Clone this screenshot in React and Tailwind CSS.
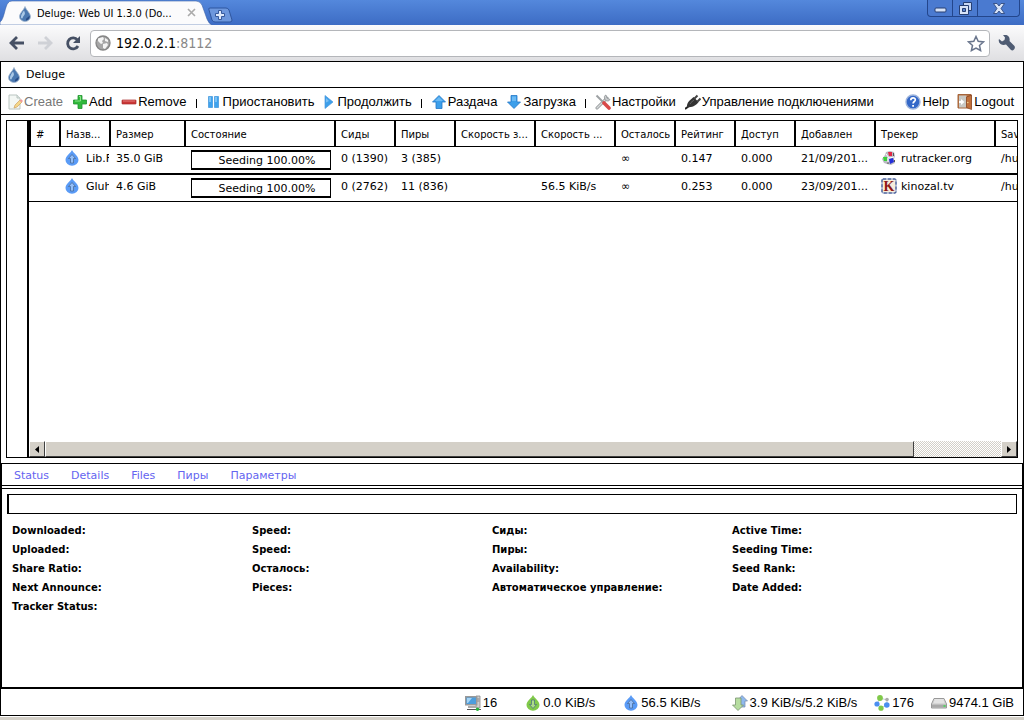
import { useState } from "react";

const COLUMNS = [
    { key: "num", label: "#", width: "w-[30px]" },
    { key: "name", label: "Назв...", width: "w-[50px]" },
    { key: "size", label: "Размер", width: "w-[75px]" },
    { key: "state", label: "Состояние", width: "w-[150px]" },
    { key: "seeds", label: "Сиды", width: "w-[60px]" },
    { key: "peers", label: "Пиры", width: "w-[60px]" },
    { key: "down", label: "Скорость з...", width: "w-[80px]" },
    { key: "up", label: "Скорость ...", width: "w-[80px]" },
    { key: "eta", label: "Осталось", width: "w-[60px]" },
    { key: "ratio", label: "Рейтинг", width: "w-[60px]" },
    { key: "avail", label: "Доступ", width: "w-[60px]" },
    { key: "added", label: "Добавлен", width: "w-[80px]" },
    { key: "tracker", label: "Трекер", width: "w-[120px]" },
    { key: "path", label: "Sav", width: "w-[120px]" },
];

const TORRENTS = [
    { name: "Lib.F", size: "35.0 GiB", state: "Seeding 100.00%", seeds: "0 (1390)", peers: "3 (385)", up: "", eta: "∞", ratio: "0.147", avail: "0.000", added: "21/09/201...", tracker: "rutracker.org", icon: RutrackerIcon, path: "/hu" },
    { name: "Gluh", size: "4.6 GiB", state: "Seeding 100.00%", seeds: "0 (2762)", peers: "11 (836)", up: "56.5 KiB/s", eta: "∞", ratio: "0.253", avail: "0.000", added: "23/09/201...", tracker: "kinozal.tv", icon: KinozalIcon, path: "/hu" },
];

const DETAILS = [
    ["Downloaded:", "Uploaded:", "Share Ratio:", "Next Announce:", "Tracker Status:"],
    ["Speed:", "Speed:", "Осталось:", "Pieces:"],
    ["Сиды:", "Пиры:", "Availability:", "Автоматическое управление:"],
    ["Active Time:", "Seeding Time:", "Seed Rank:", "Date Added:"],
];

const TABS = ["Status", "Details", "Files", "Пиры", "Параметры"];

export default function App() {
    return (
        <div className="flex min-h-screen flex-col bg-white font-['DejaVu_Sans',sans-serif] text-[11px] text-black">
            <BrowserChrome />
            <main className="flex flex-1 flex-col border-x border-t border-black">
                <header className="flex h-[26px] items-center gap-1 border-b border-black pt-px pl-[5px]">
                    <DropIcon />
                    <h1 className="text-[11px]">Deluge</h1>
                </header>
                <Toolbar />
                <TorrentGrid />
                <DetailsPanel />
                <StatusBar />
            </main>
            <div className="mt-px h-[3px] bg-[#d4d0c8]" />
        </div>
    );
}

function BrowserChrome() {
    const [url, setUrl] = useState("192.0.2.1");

    return (
        <div className="font-['DejaVu_Sans_Condensed','DejaVu_Sans',sans-serif]">
            <div className="flex h-[25px] items-start justify-between bg-linear-to-b from-[#5488dc] to-[#3d6cc4]">
                <div className="flex">
                    <div className="relative flex h-[25px] w-[208px] items-center">
                        <svg className="absolute inset-0" width="212" height="25" viewBox="0 0 212 25">
                            <path d="M0 25V22C4 20 5 6 8 3Q9 1 12 1H196Q200 1 202 5L207 19Q209 24 212 25Z" fill="#fbfbfc" stroke="#3a62a8" strokeWidth=".6" />
                        </svg>
                        <span className="relative flex flex-1 items-center gap-1 pt-[3px] pl-[17px] text-[11px]">
                            <DropIcon />
                            <span className="w-[147px]">Deluge: Web UI 1.3.0 (Do...</span>
                        </span>
                        <button aria-label="Close tab" className="relative mr-3">
                            <svg width="9" height="9" viewBox="0 0 9 9"><path d="M1 1l7 7M8 1l-7 7" stroke="#aaa" strokeWidth="1.6" /></svg>
                        </button>
                    </div>
                    <button aria-label="New tab" className="mt-[5px]">
                        <svg width="26" height="16" viewBox="0 0 26 16">
                            <path d="M2 1H18Q20 1 21 3L24 13Q24 15 22 15H7Q5 15 4 13L1 3Q0 1 2 1Z" fill="#6d97dd" stroke="#2f569f" />
                            <path d="M10.500 3.500h3v3h3v3h-3v3h-3v-3h-3v-3h3z" fill="#dde8fa" stroke="#36599c" />
                        </svg>
                    </button>
                </div>
                <div className="mr-1 flex h-[17px] rounded-b border border-t-0 border-[#23468c] bg-[#4a7ad0]">
                    <button aria-label="Minimize" className="grid w-[25px] place-items-center border-r border-[#23468c]">
                        <svg width="13" height="14" viewBox="0 0 13 14"><rect x="1" y="7" width="11" height="4" rx="1" fill="#d8e4f8" stroke="#263f73" /></svg>
                    </button>
                    <button aria-label="Restore" className="grid w-[25px] place-items-center border-r border-[#23468c]">
                        <svg width="13" height="13" viewBox="0 0 13 13">
                            <path d="M4.500.5h8v8h-8z" fill="#c9d9f5" stroke="#263f73" />
                            <path d="M.5 3.500h9v9h-9z" fill="#d8e4f8" stroke="#263f73" />
                            <path d="M3.500 6.500h3v3h-3z" fill="#5c86d2" stroke="#263f73" />
                        </svg>
                    </button>
                    <button aria-label="Close" className="grid w-[41px] place-items-center">
                        <svg width="12" height="11" viewBox="0 0 12 11"><path d="M.5.5h3.500L6 3 8 .5h3.500L8 5.500l3.500 5H8L6 8l-2 2.500H.5L4 5.500z" fill="#d8e4f8" stroke="#263f73" strokeWidth=".8" /></svg>
                    </button>
                </div>
            </div>
            <div className="flex h-9 items-center bg-linear-to-b from-[#fbfbfc] to-[#dfdfe2] pl-[9px]">
                <button aria-label="Back" className="mr-3">
                    <svg width="16" height="14" viewBox="0 0 16 14"><path d="M8 1L2 7l6 6M2 7h13" fill="none" stroke="#465064" strokeWidth="2.800" /></svg>
                </button>
                <button aria-label="Forward" className="mr-3">
                    <svg width="16" height="14" viewBox="0 0 16 14"><path d="M8 1l6 6-6 6M14 7H1" fill="none" stroke="#cfd1d6" strokeWidth="2.800" /></svg>
                </button>
                <button aria-label="Reload" className="mr-[9px]">
                    <svg width="16" height="15" viewBox="0 0 16 15">
                        <path d="M12.500 4A5.500 5.500 0 1 0 13 10" fill="none" stroke="#465064" strokeWidth="2.800" />
                        <path d="M15 0v7H8z" fill="#465064" />
                    </svg>
                </button>
                <div className="flex h-[27px] flex-1 items-center gap-[5px] rounded border border-[#b4b6ba] bg-white px-1 text-sm">
                    <svg width="16" height="16" viewBox="0 0 16 16">
                        <circle cx="8" cy="8" r="7" fill="#a6a6a6" stroke="#858585" strokeWidth="1.300" />
                        <path d="M3 3.500L8 2l1 2-2 2 1 2-2 1-3-3zM8 9l4-1 1 2-3 4-2-1zM10 3l3 2v2l-3-1z" fill="#f4f4f4" />
                    </svg>
                    <label className="flex flex-1 items-center">
                        <input aria-label="Address" value={url} onChange={(e) => setUrl(e.target.value)} className="field-sizing-content outline-none" />
                        <span className="text-[#888]">:8112</span>
                    </label>
                    <button aria-label="Bookmark">
                        <svg width="18" height="17" viewBox="0 0 18 17"><path d="M9 1.500l2.200 4.800 5.300.6-4 3.500 1.100 5.100L9 13l-4.600 2.500 1.100-5.100-4-3.500 5.300-.6z" fill="#fff" stroke="#69758c" strokeWidth="1.500" /></svg>
                    </button>
                </div>
                <button aria-label="Settings" className="mx-2">
                    <svg width="18" height="16" viewBox="0 0 18 16"><path d="M5 0q4-1 6 2 1 2 .5 4l5 5q1 2-.5 3.500T13 15L8 9.500Q5 10.500 2.500 9 0 7 1 4l3 2.500L6.500 5 7 2.500z" fill="#4e5b72" /></svg>
                </button>
            </div>
        </div>
    );
}

function ToolButton({ icon: Icon, label, disabled }) {
    return (
        <button disabled={disabled} className="flex items-center gap-px whitespace-nowrap disabled:text-[#777]">
            <Icon />
            {label}
        </button>
    );
}

function Separator() {
    return <span className="mt-[3px] h-[9px] w-px bg-black" />;
}

function Toolbar() {
    return (
        <nav className="flex h-[27px] items-center gap-[9px] border-b border-black px-[6px] pt-px font-['Liberation_Sans',sans-serif] text-[13px]">
            <ToolButton icon={CreateIcon} label="Create" disabled />
            <ToolButton icon={AddIcon} label="Add" />
            <ToolButton icon={RemoveIcon} label="Remove" />
            <Separator />
            <div className="flex gap-[6px]">
                <ToolButton icon={PauseIcon} label="Приостановить" />
                <ToolButton icon={PlayIcon} label="Продолжить" />
            </div>
            <Separator />
            <ToolButton icon={UpIcon} label="Раздача" />
            <ToolButton icon={DownIcon} label="Загрузка" />
            <Separator />
            <ToolButton icon={ToolsIcon} label="Настройки" />
            <ToolButton icon={PlugIcon} label="Управление подключениями" />
            <div className="ml-auto flex gap-2 pr-[3px]">
                <ToolButton icon={HelpIcon} label="Help" />
                <ToolButton icon={LogoutIcon} label="Logout" />
            </div>
        </nav>
    );
}

function TorrentGrid() {
    return (
        <section className="flex flex-1 px-[5px] py-[5px]">
            <div className="flex min-w-0 flex-1 border border-black">
                <aside className="w-5" />
                <div className="flex min-w-0 flex-1 flex-col border-l-2 border-black">
                    <div className="flex-1 overflow-hidden">
                        <table className="w-[1085px] table-fixed border-separate border-spacing-0">
                            <thead>
                                <tr className="h-[26px] text-[10px]">
                                    {COLUMNS.map((c) => (
                                        <th key={c.key} className={`${c.width} border-b border-l-2 border-black pt-[2px] pl-[5px] text-left font-normal whitespace-nowrap`}>{c.label}</th>
                                    ))}
                                </tr>
                            </thead>
                            <tbody className="[&>tr:first-child>td]:h-7 [&>tr:first-child>td]:border-b-2">
                                {TORRENTS.map((t) => <TorrentRow key={t.name} t={t} />)}
                            </tbody>
                        </table>
                    </div>
                    <Scrollbar />
                </div>
            </div>
        </section>
    );
}

function Cell({ children }) {
    return <td className="h-[27px] border-b border-black py-[3px] pl-[7px] align-top leading-[18px] whitespace-nowrap">{children}</td>;
}

function TorrentRow({ t }) {
    const Tracker = t.icon;
    return (
        <tr>
            <Cell />
            <td className="overflow-hidden border-b border-black py-[3px] pl-[5px] align-top">
                <div className="flex gap-[6px] overflow-hidden leading-[18px] whitespace-nowrap"><SeedIcon color="#5a9bf6" up />{t.name}</div>
            </td>
            <Cell>{t.size}</Cell>
            <td className="border-b border-black py-[3px] pr-[3px] pl-[7px] align-top">
                <div className="h-5 border-x border-y-2 border-black pl-3 text-center leading-[18px]">{t.state}</div>
            </td>
            <Cell>{t.seeds}</Cell>
            <Cell>{t.peers}</Cell>
            <Cell />
            <Cell>{t.up}</Cell>
            <Cell>{t.eta}</Cell>
            <Cell>{t.ratio}</Cell>
            <Cell>{t.avail}</Cell>
            <Cell>{t.added}</Cell>
            <Cell><span className="flex gap-1"><Tracker />{t.tracker}</span></Cell>
            <Cell>{t.path}</Cell>
        </tr>
    );
}

function Scrollbar() {
    const btn = "grid h-4 w-4 place-items-center border border-t-white border-l-white border-r-[#404040] border-b-[#404040] bg-[#d4d0c8]";
    return (
        <div className="flex h-4 bg-[repeating-conic-gradient(#d4d0c8_0_25%,#fff_0_50%)] bg-size-[2px_2px]">
            <button aria-label="Scroll left" className={btn}>
                <svg width="4" height="7" viewBox="0 0 4 7"><path d="M4 0v7L0 3.500z" /></svg>
            </button>
            <div className="w-[88%] border border-t-white border-r-[#404040] border-b-[#404040] border-l-white bg-[#d4d0c8]" />
            <button aria-label="Scroll right" className={`${btn} ml-auto`}>
                <svg width="4" height="7" viewBox="0 0 4 7"><path d="M0 0v7l4-3.500z" /></svg>
            </button>
        </div>
    );
}

function DetailsPanel() {
    const [tab, setTab] = useState("Status");

    return (
        <section className="min-h-[226px] border-x border-t border-b-2 border-black">
            <div className="flex h-[22px] items-center gap-[22px] border-b border-black px-3 pt-[3px] text-[#6464f0]">
                {TABS.map((t) => (
                    <button key={t} aria-pressed={t === tab} onClick={() => setTab(t)}>{t}</button>
                ))}
            </div>
            <div className="mt-[2px] border-t border-black px-[5px] pt-[5px]">
                <div className="h-5 border border-l-2 border-black" />
                <div className="flex pt-[7px] pl-[5px] text-[10px] font-bold">
                    {DETAILS.map((col, i) => (
                        <dl key={i} className="w-60 leading-[19px]">
                            {col.map((label, j) => <dt key={j}>{label}</dt>)}
                        </dl>
                    ))}
                </div>
            </div>
        </section>
    );
}

function StatusItem({ icon, children }) {
    return <span className="flex items-center gap-[2px]">{icon}{children}</span>;
}

function StatusBar() {
    return (
        <footer className="flex h-[27px] items-center justify-end gap-[17px] border-b border-black pt-px pr-[9px] font-['Liberation_Sans',sans-serif] text-[13px]">
            <div className="flex gap-7 pr-[14px]">
                <StatusItem icon={<ComputerIcon />}>16</StatusItem>
                <StatusItem icon={<SeedIcon color="#80c94a" />}>0.0 KiB/s</StatusItem>
                <StatusItem icon={<SeedIcon color="#5a9bf6" up />}>56.5 KiB/s</StatusItem>
            </div>
            <StatusItem icon={<TrafficIcon />}>3.9 KiB/s/5.2 KiB/s</StatusItem>
            <StatusItem icon={<DhtIcon />}>176</StatusItem>
            <StatusItem icon={<DiskIcon />}>9474.1 GiB</StatusItem>
        </footer>
    );
}

function Icon({ children }) {
    return <svg className="shrink-0" width="16" height="16" viewBox="0 0 16 16" fill="none">{children}</svg>;
}

function DropIcon() {
    return (
        <Icon>
            <path d="M8 .5C9 4 13.500 7 13.500 10.500a5.500 5 0 0 1-11 0C2.500 7 7 4 8 .5z" fill="#4a78b0" stroke="#9fb4cc" strokeWidth=".8" />
            <path d="M4 10.500C4 8.500 6 6 7 4.500 8 6.500 8.500 8 7 9.500s-1 3-2 3-1-1-1-2z" fill="#a9c8e6" />
            <path d="M9 14.500c3-.5 4-3 3.500-5-1 2-4 2-3.500 5z" fill="#284c86" />
        </Icon>
    );
}

function SeedIcon({ color, up }) {
    return (
        <Icon>
            <path d="M8 0C9 3 14.500 5.500 14.500 10a6.500 5.800 0 0 1-13 0C1.500 5.500 7 3 8 0z" fill={color} />
            <path d={up ? "M8 4.500l3.500 4h-2v4.500h-3V8.500h-2z" : "M8 13.500l3.500-4h-2V5h-3v4.500h-2z"} fill="#fff" fillOpacity=".35" stroke="#3f5f86" strokeOpacity=".8" strokeWidth=".8" />
        </Icon>
    );
}

function CreateIcon() {
    return (
        <Icon>
            <path d="M2 1h8l3 3v11H2z" fill="#f3f7f4" stroke="#bac5c1" />
            <path d="M10 1v3h3" fill="#dce6e2" stroke="#bac5c1" />
            <path d="M7 14l1-3 5-5 2 2-5 5z" fill="#f5d88a" stroke="#cfa163" strokeWidth=".7" />
            <path d="M12.500 6.500l2 2L16 7l-2-2z" fill="#ef9a9a" />
        </Icon>
    );
}

function AddIcon() {
    return (
        <Icon>
            <path d="M6 1.500h4V6h4.500v4H10v4.500H6V10H1.500V6H6z" fill="#31b93b" stroke="#1f9330" strokeWidth=".8" />
            <path d="M7 2.500h1.500V7H3" stroke="#8de38b" />
        </Icon>
    );
}

function RemoveIcon() {
    return (
        <Icon>
            <rect x="1" y="6" width="14" height="4" rx=".5" fill="#c93636" stroke="#a92c2c" strokeWidth=".7" />
            <path d="M2 7h12" stroke="#e68080" />
        </Icon>
    );
}

function PauseIcon() {
    return (
        <Icon>
            <path d="M2.500 2.500h4v11h-4zM8.500 2.500h4v11h-4z" fill="#3fa3ee" stroke="#4a9ade" strokeWidth=".8" />
            <path d="M4 3v5M10 3v5" stroke="#8fcdf8" strokeWidth="1.500" />
        </Icon>
    );
}

function PlayIcon() {
    return (
        <Icon>
            <path d="M4 1.500L12 8l-8 6.500z" fill="#3d9fea" stroke="#4a9ade" strokeWidth=".7" />
            <path d="M5 4v4.500l3-1.500z" fill="#7cc0f4" />
        </Icon>
    );
}

function UpIcon() {
    return (
        <Icon>
            <path d="M8 1.500L14.500 8H11v6.500H5V8H1.500z" fill="#3d9fea" stroke="#2377c6" strokeWidth=".8" />
            <path d="M8 3L4 7h8z" fill="#6cbaf3" />
        </Icon>
    );
}

function DownIcon() {
    return (
        <Icon>
            <path d="M8 14.500L14.500 8H11V1.500H5V8H1.500z" fill="#3d9fea" stroke="#2377c6" strokeWidth=".8" />
            <path d="M6 2.500h4V7H6z" fill="#6cbaf3" />
        </Icon>
    );
}

function ToolsIcon() {
    return (
        <Icon>
            <path d="M2 14L12 4" stroke="#8b8f92" strokeWidth="3" strokeLinecap="round" />
            <path d="M2 14L12 4" stroke="#d7dadb" strokeWidth="1.500" strokeLinecap="round" />
            <path d="M11 1l1 3 3 1.500c-1 2-4 2-5 0S9 1.500 11 1z" fill="#c7cacc" stroke="#85898c" strokeWidth=".7" />
            <path d="M1.500 1.500L9 9" stroke="#9da1a3" strokeWidth="2" />
            <path d="M9 9l5 5" stroke="#d94a4a" strokeWidth="3.600" strokeLinecap="round" />
        </Icon>
    );
}

function PlugIcon() {
    return (
        <Icon>
            <path d="M0 15L4 12" stroke="#222" strokeWidth="2" />
            <path d="M2 13C1.500 8 6 5.500 8.500 3L13.500 8c-2 3-6 6-11.500 5z" fill="#333" />
            <path d="M5 10c1-2 3-3 4-4" stroke="#666" />
            <path d="M9.500 4.500l3-3M12.500 7.500l3-3" stroke="#444" strokeWidth="2" />
        </Icon>
    );
}

function HelpIcon() {
    return (
        <Icon>
            <circle cx="8" cy="8" r="7" fill="#3468c8" stroke="#9eb5dd" strokeWidth="1.400" />
            <path d="M5.800 6.300C5.800 3 10.500 3.300 10.300 6c-.1 1.500-2.200 1.600-2.200 3.500" stroke="#fff" strokeWidth="1.700" />
            <path d="M7.200 11h1.800v1.700H7.200z" fill="#fff" />
        </Icon>
    );
}

function LogoutIcon() {
    return (
        <Icon>
            <path d="M1 .5h13v13.500H1z" fill="#b87343" stroke="#a5643a" />
            <path d="M2 1.500h7.500v12H2z" fill="#c8c8c4" />
            <path d="M9.500 3l5-2v14.500l-5-2z" fill="#c0703c" stroke="#84411d" strokeWidth=".7" />
            <path d="M2 7h2V5l3.500 3L4 11V9H2z" fill="#fff" />
            <circle cx="10.800" cy="8.500" r=".8" fill="#f4d68c" />
        </Icon>
    );
}

function RutrackerIcon() {
    return (
        <Icon>
            <path d="M5 2l4-1 4 1 1 4-1 3 1 4-4 2-4-1-3-1-2-4 3-4z" fill="#b9b9c2" />
            <path d="M7 2h4v4H8z" fill="#e22745" />
            <path d="M2 7h4v4H3z" fill="#3ad13a" />
            <path d="M8 9l4-1 1 4-4 2z" fill="#2430da" />
            <path d="M5 4l3 4 5-1M7 8v5" stroke="#fff" />
            <path d="M12.500 3v3M13.500 10v2M6 13h2" stroke="#555" />
        </Icon>
    );
}

function KinozalIcon() {
    return (
        <svg className="shrink-0" width="16" height="16" viewBox="0 0 16 16">
            <rect x="1" y="1" width="14" height="14" rx="1" fill="#f7edda" stroke="#7d92c4" />
            <rect x="1" y="1" width="14" height="14" rx="1" fill="none" stroke="#2f4788" strokeDasharray="3 2" />
            <text x="8" y="12.500" textAnchor="middle" fontFamily="Liberation Serif" fontWeight="bold" fontSize="14" fill="#8f1717">K</text>
        </svg>
    );
}

function ComputerIcon() {
    return (
        <Icon>
            <path d="M11 1h4v12h-4z" fill="#cfcfcf" stroke="#888" strokeWidth=".8" />
            <path d="M11.500 4h3M11.500 6h3" stroke="#888" />
            <path d="M.7 1.700h11v8h-11z" fill="#4c9ddd" stroke="#999" strokeWidth="1.400" />
            <path d="M2 3h5L3 8H2z" fill="#a5d4f5" />
            <path d="M3 12h8" stroke="#aaa" strokeWidth="2" />
            <path d="M2 14.500h14" stroke="#555" />
            <circle cx="12.500" cy="14.300" r="1.700" fill="#27b43a" />
        </Icon>
    );
}

function TrafficIcon() {
    return (
        <Icon>
            <path d="M10 .5L15.500 6H13v6H8V6H5z" fill="#8fb9ee" stroke="#7187a6" strokeWidth=".7" />
            <path d="M6 15.500L11.500 10H9V3H3.500v7H.5z" fill="#b6dda0" stroke="#7b9572" strokeWidth=".8" />
        </Icon>
    );
}

function DhtIcon() {
    return (
        <Icon>
            <path d="M6 3L3 9l4 4 6-3V5z" stroke="#c5ccd4" />
            <circle cx="6" cy="3" r="2.900" fill="#80c94a" />
            <circle cx="13" cy="4.500" r="1.800" fill="#aaa" />
            <circle cx="3" cy="9" r="2.600" fill="#4b8ff0" />
            <circle cx="12.800" cy="10" r="2.800" fill="#4b8ff0" />
            <circle cx="7" cy="13.200" r="2.600" fill="#80c94a" />
        </Icon>
    );
}

function DiskIcon() {
    return (
        <Icon>
            <path d="M3 3.500h10L15.500 9v4h-15V9z" fill="#d6d6d6" stroke="#999" />
            <path d="M1 9.500h14v3H1z" fill="#a9a9a9" />
            <path d="M3.500 5h9M3 7h10" stroke="#f2f2f2" />
            <path d="M12.500 11h2" stroke="#3ce04c" strokeWidth="1.500" />
        </Icon>
    );
}
